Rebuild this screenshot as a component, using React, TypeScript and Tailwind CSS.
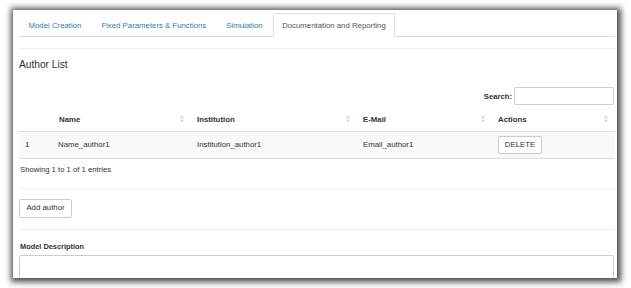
import React from "react";

function SortIcon() {
  return (
    <svg
      width="4"
      height="8"
      viewBox="0 0 4 8"
      className="absolute top-1/2 -translate-y-1/2 right-[7px] mt-[1px]"
    >
      <polygon points="0,3.3 2,0.6 4,3.3" fill="#d4d4d4" />
      <polygon points="0,4.7 4,4.7 2,7.4" fill="#d4d4d4" />
    </svg>
  );
}

export default function App() {
  const tabs = [
    { label: "Model Creation", active: false },
    { label: "Fixed Parameters & Functions", active: false },
    { label: "Simulation", active: false },
    { label: "Documentation and Reporting", active: true },
  ];
  return (
    <div className="w-[631px] h-[288px] bg-white overflow-hidden font-['Liberation_Sans',Arial,sans-serif] text-[#333]">
      <div className="ml-[13px] mt-[10px] w-[604px] h-[268px] bg-white shadow-[1px_1px_6px_3px_rgba(0,0,0,0.7)] overflow-hidden pl-[6px] pr-[2px]">
        {/* Tabs */}
        <div className="flex pt-[3px] border-b border-[#ddd] h-[27px]">
          {tabs.map((t) => (
            <div
              key={t.label}
              className={
                t.active
                  ? "mr-[1px] -mb-px h-[24px] px-[8px] flex items-center text-[7.8px] leading-[11px] text-[#555] bg-white border border-[#ddd] border-b-white rounded-t-[2px] pt-px"
                  : "mr-[1px] h-[23px] px-[8.5px] flex items-center text-[7.8px] leading-[11px] text-[#337ab7] border border-transparent pt-px"
              }
            >
              {t.label}
            </div>
          ))}
        </div>

        <div className="mt-[11px] border-t border-[#eee]" />

        <h4 className="mt-[10px] text-[10.2px] leading-[12px] text-[#333]">Author List</h4>

        <div className="mt-[16px] flex justify-end items-center gap-[2px] mr-[1px]">
          <label className="text-[7.7px] font-bold leading-[11px]">Search:</label>
          <div className="w-[100px] h-[18px] border border-[#ccc] rounded-[2px] bg-white" />
        </div>

        <table className="w-full table-fixed border-collapse mt-[1px] text-[7.8px] leading-[11px]">
          <colgroup>
            <col className="w-[34px]" />
            <col className="w-[138px]" />
            <col className="w-[166px]" />
            <col className="w-[135px]" />
            <col className="w-[123px]" />
          </colgroup>
          <thead>
            <tr className="h-[25px] border-b border-[#ddd]">
              <th className="pl-[6px] pt-[2px] text-left font-bold align-middle"></th>
              <th className="relative pl-[6px] pt-[2px] text-left font-bold align-middle">
                Name
                <SortIcon />
              </th>
              <th className="relative pl-[6px] pt-[2px] text-left font-bold align-middle">
                Institution
                <SortIcon />
              </th>
              <th className="relative pl-[6px] pt-[2px] text-left font-bold align-middle">
                E-Mail
                <SortIcon />
              </th>
              <th className="relative pl-[6px] pt-[2px] text-left font-bold align-middle">
                Actions
                <SortIcon />
              </th>
            </tr>
          </thead>
          <tbody>
            <tr className="h-[27px] bg-[#f9f9f9] border-b border-[#ddd]">
              <td className="pl-[6px] align-middle">1</td>
              <td className="pl-[5px] align-middle">Name_author1</td>
              <td className="pl-[6px] align-middle">Institution_author1</td>
              <td className="pl-[6px] align-middle">Email_author1</td>
              <td className="pl-[6px] align-middle">
                <button className="w-[44px] h-[18px] border border-[#ccc] rounded-[2px] bg-white text-[7.8px] text-[#333] flex items-center justify-center">
                  DELETE
                </button>
              </td>
            </tr>
          </tbody>
        </table>

        <div className="mt-[5px] text-[7.7px] leading-[12px] pl-px">Showing 1 to 1 of 1 entries</div>

        <div className="mt-[12px] border-t border-[#eee]" />

        <button className="mt-[10px] w-[53px] h-[19px] border border-[#ccc] rounded-[2px] bg-white text-[7.8px] text-[#333] flex items-center justify-center">
          Add author
        </button>

        <div className="mt-[11px] border-t border-[#eee]" />

        <div className="mt-[11px] text-[7.4px] leading-[11px] font-bold pl-px">Model Description</div>

        <div className="mt-[3px] mr-[1px] h-[40px] border border-[#ccc] rounded-[2px] bg-white" />
      </div>
    </div>
  );
}
